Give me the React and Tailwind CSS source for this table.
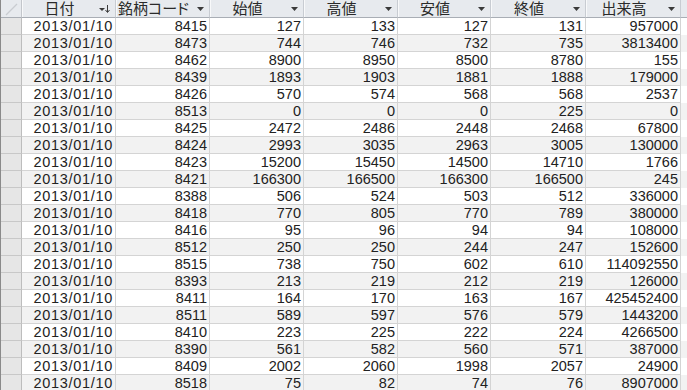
import React from 'react';

const rows = [
  [8415, 127, 133, 127, 131, 957000],
  [8473, 744, 746, 732, 735, 3813400],
  [8462, 8900, 8950, 8500, 8780, 155],
  [8439, 1893, 1903, 1881, 1888, 179000],
  [8426, 570, 574, 568, 568, 2537],
  [8513, 0, 0, 0, 225, 0],
  [8425, 2472, 2486, 2448, 2468, 67800],
  [8424, 2993, 3035, 2963, 3005, 130000],
  [8423, 15200, 15450, 14500, 14710, 1766],
  [8421, 166300, 166500, 166300, 166500, 245],
  [8388, 506, 524, 503, 512, 336000],
  [8418, 770, 805, 770, 789, 380000],
  [8416, 95, 96, 94, 94, 108000],
  [8512, 250, 250, 244, 247, 152600],
  [8515, 738, 750, 602, 610, 114092550],
  [8393, 213, 219, 212, 219, 126000],
  [8411, 164, 170, 163, 167, 425452400],
  [8511, 589, 597, 576, 579, 1443200],
  [8410, 223, 225, 222, 224, 4266500],
  [8390, 561, 582, 560, 571, 387000],
  [8409, 2002, 2060, 1998, 2057, 24900],
  [8518, 75, 82, 74, 76, 8907000],
];

const headers = ['日付', '銘柄コード', '始値', '高値', '安値', '終値', '出来高'];
const widths = ['w-[94px]', 'w-[94px]', 'w-[94px]', 'w-[94px]', 'w-[93px]', 'w-[95px]', 'w-[95px]'];

const DropArrow = () => (
  <svg width="7" height="4" viewBox="0 0 7 4" className="shrink-0">
    <polygon points="0,0 7,0 3.5,4" fill="#3a3a3a" />
  </svg>
);

const SortArrow = () => (
  <svg width="11" height="8" viewBox="0 0 11 8" className="shrink-0">
    <polygon points="0,3 6,3 3,6" fill="#3a3a3a" />
    <line x1="8.5" y1="0" x2="8.5" y2="7" stroke="#3a3a3a" strokeWidth="1" />
    <polyline points="6.5,5 8.5,7.5 10.5,5" fill="none" stroke="#3a3a3a" strokeWidth="1" />
  </svg>
);

const HeaderCell = ({ label, width, sorted }) => (
  <div
    className={`${width} h-[18px] shrink-0 flex items-center border-r border-b border-r-[#c8ccd2] border-b-[#a9aeb5] bg-[#e7eaee] shadow-[inset_1px_0_0_#f8f9fa]`}
  >
    <span className="flex-1 min-w-0 text-center text-[15px] leading-[17px] text-[#2a2a2a] whitespace-nowrap [font-feature-settings:'palt']">
      {label}
    </span>
    <span className="w-[18px] shrink-0 pr-[5px] flex items-center justify-end">
      {sorted ? <SortArrow /> : <DropArrow />}
    </span>
  </div>
);

export default function App() {
  return (
    <div
      className="w-[687px] h-[390px] overflow-hidden bg-white border-l border-l-[#8a8a8a]"
      style={{ fontFamily: '"Liberation Sans", "Noto Sans CJK JP", sans-serif' }}
    >
      <div className="flex">
        <div className="w-[21px] h-[18px] shrink-0 border-r border-b border-r-[#c3c6cb] border-b-[#a9aeb5] bg-[#e7eaee] flex items-center justify-center">
          <svg width="16" height="14" viewBox="0 0 16 14">
            <line x1="3" y1="13" x2="14" y2="2" stroke="#c9ccd1" strokeWidth="1.2" />
          </svg>
        </div>
        {headers.map((h, i) => (
          <HeaderCell key={h} label={h} width={widths[i]} sorted={i === 0} />
        ))}
        <div className="flex-1 h-[18px] border-b border-b-[#a9aeb5] bg-[#e7eaee]" />
      </div>
      {rows.map((r, ri) => {
        const bg = ri % 2 === 1 ? 'bg-[#f2f2f2]' : 'bg-white';
        const cells = ['2013/01/10', ...r.map(String)];
        return (
          <div key={ri} className="flex">
            <div className="w-[21px] h-[17px] shrink-0 border-r border-b border-r-[#bdbdbd] border-b-[#c8c8c8] bg-[#e6e6e6]" />
            {cells.map((c, ci) => (
              <div
                key={ci}
                className={`${widths[ci]} h-[17px] shrink-0 border-r border-b border-[#d4d4d4] ${bg} text-right pr-[2px] pt-px text-[14.5px] leading-[15px] text-[#222] whitespace-nowrap overflow-hidden ${ci === 0 ? 'tracking-[0.7px]' : ''}`}
              >
                {c}
              </div>
            ))}
            <div className={`flex-1 h-[17px] ${bg}`} />
          </div>
        );
      })}
    </div>
  );
}
